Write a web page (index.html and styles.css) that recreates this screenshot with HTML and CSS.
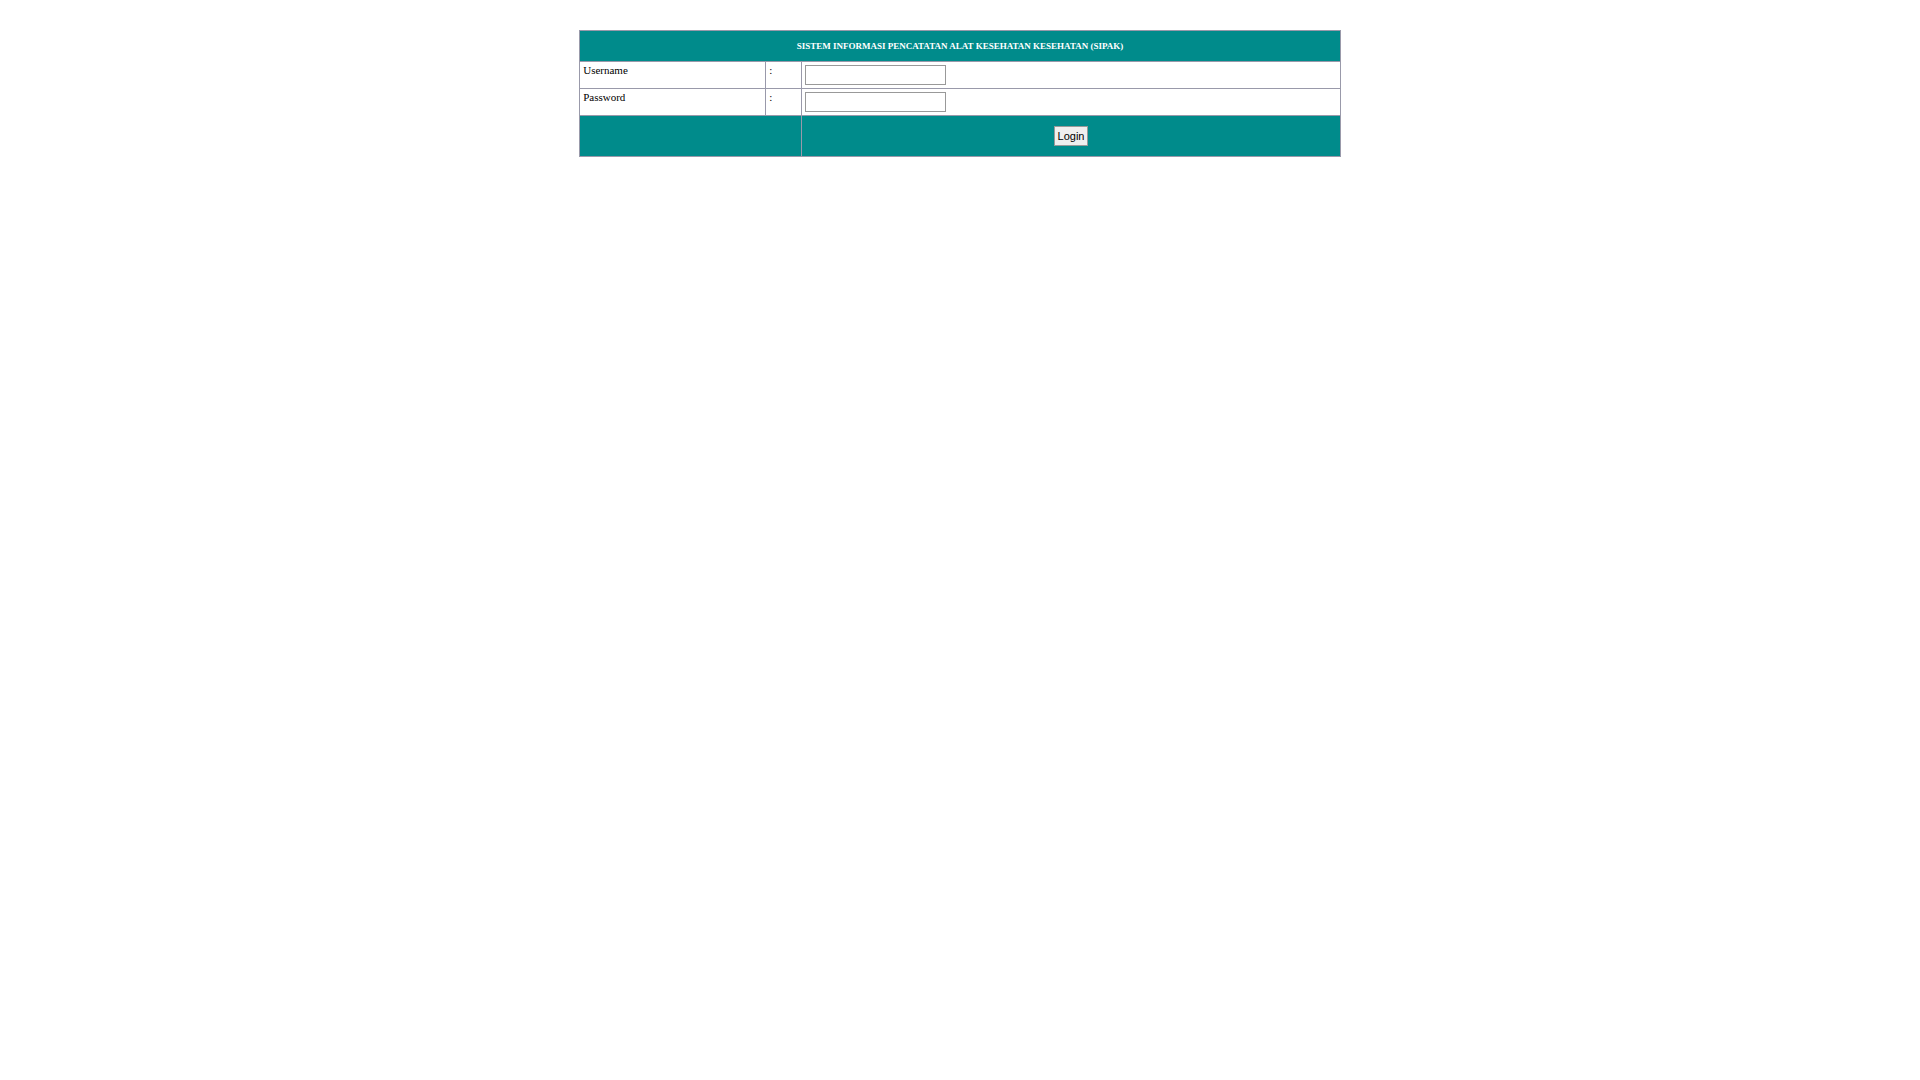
FILE: index.html
```html
<!DOCTYPE html>
<html lang="id">
<head>
  <meta charset="UTF-8">
  <meta name="viewport" content="width=device-width, initial-scale=1.0">
  <title>SIPAK - Login</title>
  <link rel="stylesheet" href="styles.css">
</head>
<body>
  <form class="login" action="#" method="post">
    <table class="login-table">
      <colgroup>
        <col class="col-label">
        <col class="col-colon">
        <col>
      </colgroup>
      <tr class="bar">
        <th colspan="3">SISTEM INFORMASI PENCATATAN ALAT KESEHATAN KESEHATAN (SIPAK)</th>
      </tr>
      <tr>
        <td><label for="username">Username</label></td>
        <td>:</td>
        <td><input class="field" type="text" id="username" name="username"></td>
      </tr>
      <tr>
        <td><label for="password">Password</label></td>
        <td>:</td>
        <td><input class="field" type="password" id="password" name="password"></td>
      </tr>
      <tr class="bar">
        <td colspan="2"></td>
        <td class="action"><button class="btn" type="submit">Login</button></td>
      </tr>
    </table>
  </form>
</body>
</html>
```

FILE: styles.css
```css
body {
  margin: 30px 8px;
  background-color: #ffffff;
  font-family: "Times New Roman", "Liberation Serif", serif;
  font-size: 11px;
  line-height: 11px;
  color: #000000;
}
.login-table {
  width: 40%;
  margin: 0 auto;
  border-collapse: collapse;
  table-layout: fixed;
}
.col-label {
  width: 186px;
}
.col-colon {
  width: 36px;
}
.login-table th,
.login-table td {
  border: 1px solid #9999aa;
  padding: 3px;
  text-align: left;
  vertical-align: top;
}
.login-table .bar {
  background-color: #008b8b;
}
.login-table th {
  padding: 9px 3px;
  font-size: 9px;
  line-height: 12px;
  text-align: center;
  color: #ffffff;
}
.login-table .action {
  padding: 10px 3px;
  text-align: center;
}
.field {
  display: block;
  box-sizing: border-box;
  width: 141px;
  height: 20px;
  border: 1px solid #999999;
  font-family: Arial, "Liberation Sans", sans-serif;
  font-size: 11px;
}
.btn {
  display: inline-block;
  height: 20px;
  padding: 2px 3px;
  border: 1px solid #999999;
  background-color: #efefef;
  font-family: Arial, "Liberation Sans", sans-serif;
  font-size: 11px;
  vertical-align: top;
}
```
